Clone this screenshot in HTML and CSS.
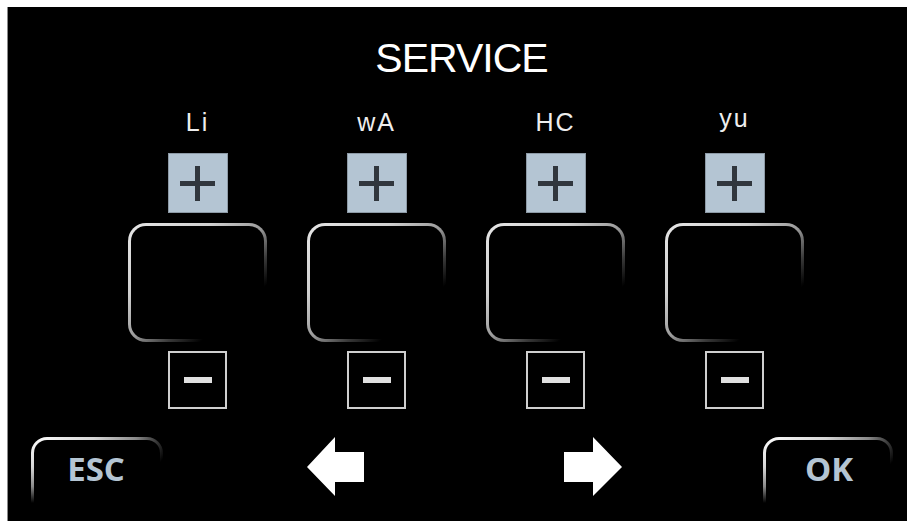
FILE: index.html
```html
<!DOCTYPE html>
<html lang="en">
<head>
    <meta charset="UTF-8">
    <title>Service</title>
    <link rel="stylesheet" href="styles.css">
</head>
<body>
<div id="screen">
    <h1 class="title">SERVICE</h1>
    <div class="columns">
        <div class="col">
            <div class="label">Li</div>
            <div class="btn-plus"><span class="plus-h"></span><span class="plus-v"></span></div>
            <div class="display"></div>
            <div class="btn-minus"><span class="minus-bar"></span></div>
        </div>
        <div class="col">
            <div class="label">wA</div>
            <div class="btn-plus"><span class="plus-h"></span><span class="plus-v"></span></div>
            <div class="display"></div>
            <div class="btn-minus"><span class="minus-bar"></span></div>
        </div>
        <div class="col">
            <div class="label">HC</div>
            <div class="btn-plus"><span class="plus-h"></span><span class="plus-v"></span></div>
            <div class="display"></div>
            <div class="btn-minus"><span class="minus-bar"></span></div>
        </div>
        <div class="col">
            <div class="label label-yu">yu</div>
            <div class="btn-plus"><span class="plus-h"></span><span class="plus-v"></span></div>
            <div class="display"></div>
            <div class="btn-minus"><span class="minus-bar"></span></div>
        </div>
    </div>
    <div class="bottom">
        <div class="key key-esc">ESC</div>
        <svg class="arrow arrow-left" width="57" height="59" viewBox="0 0 57 59">
            <polygon points="0,30 28,0 28,15 57,15 57,45 28,45 28,59" fill="#fff"/>
        </svg>
        <svg class="arrow arrow-right" width="58" height="59" viewBox="0 0 58 59">
            <polygon points="58,30 29,0 29,15 0,15 0,45 29,45 29,59" fill="#fff"/>
        </svg>
        <div class="key key-ok">OK</div>
    </div>
</div>
</body>
</html>
```

FILE: styles.css
```css
*{
    margin: 0;
    padding: 0;
    box-sizing: border-box;
}
html, body{
    background-color: #fff;
    overflow: hidden;
}
body{
    padding: 7px 0 0 7px;
    font-family: "Liberation Sans", Arial, sans-serif;
}
#screen{
    width: 900px;
    height: 514px;
    background-color: #000;
    border-left: 1px solid #8a8a8a;
    color: #fff;
}
.title{
    font-size: 41px;
    font-weight: normal;
    line-height: 41px;
    letter-spacing: -1px;
    text-align: center;
    padding-top: 31px;
    padding-left: 8px;
}
.columns{
    display: grid;
    grid-template-columns: repeat(4, 179px);
    padding-left: 100px;
    margin-top: 30px;
}
.col{
    display: flex;
    flex-direction: column;
    align-items: center;
}
.label{
    font-size: 25px;
    line-height: 26px;
    height: 26px;
    letter-spacing: 2px;
    color: #eeeeee;
}
.label-yu{
    margin-top: -4px;
    margin-bottom: 4px;
}
.btn-plus{
    position: relative;
    width: 60px;
    height: 60px;
    margin-top: 18px;
    background-color: #b4c5d3;
    border: 1px solid #8d9aa6;
}
.plus-h, .plus-v{
    position: absolute;
    background-color: #30363d;
}
.plus-h{
    left: 11px;
    top: 27px;
    width: 35px;
    height: 5px;
}
.plus-v{
    left: 26px;
    top: 12px;
    width: 5px;
    height: 35px;
}
.display{
    width: 139px;
    height: 119px;
    margin-top: 10px;
    border: 3px solid transparent;
    border-radius: 18px;
    background:
        linear-gradient(#000, #000) padding-box,
        linear-gradient(to bottom right, #e6e6e6 0%, #d0d0d0 30%, #9a9a9a 50%, #3a3a3a 64%, #000 76%) border-box;
}
.btn-minus{
    width: 59px;
    height: 58px;
    margin-top: 9px;
    border: 2px solid #cfcfcf;
    display: flex;
    align-items: center;
    justify-content: center;
}
.minus-bar{
    width: 28px;
    height: 6px;
    background-color: #e0e0e0;
}
.bottom{
    display: flex;
    align-items: flex-start;
    margin-top: 28px;
    padding-left: 23px;
}
.key{
    height: 80px;
    border: 3px solid transparent;
    border-bottom: 0;
    border-radius: 16px 16px 0 0;
    font-family: "Open Sans", sans-serif;
    font-weight: bold;
    font-size: 33px;
    line-height: 33px;
    color: #b4c5d3;
    text-align: center;
    padding-top: 12px;
    background:
        linear-gradient(#000, #000) padding-box,
        radial-gradient(ellipse 140px 66px at 0 0, #ffffff 0%, #d6d6d6 45%, #8a8a8a 75%, #000 100%) border-box;
}
.key-esc{
    width: 132px;
    padding-right: 2px;
}
.arrow{
    display: block;
}
.arrow-left{
    margin-left: 144px;
}
.arrow-right{
    margin-left: 200px;
}
.key-ok{
    width: 130px;
    margin-left: 141px;
    padding-left: 2px;
}
```
